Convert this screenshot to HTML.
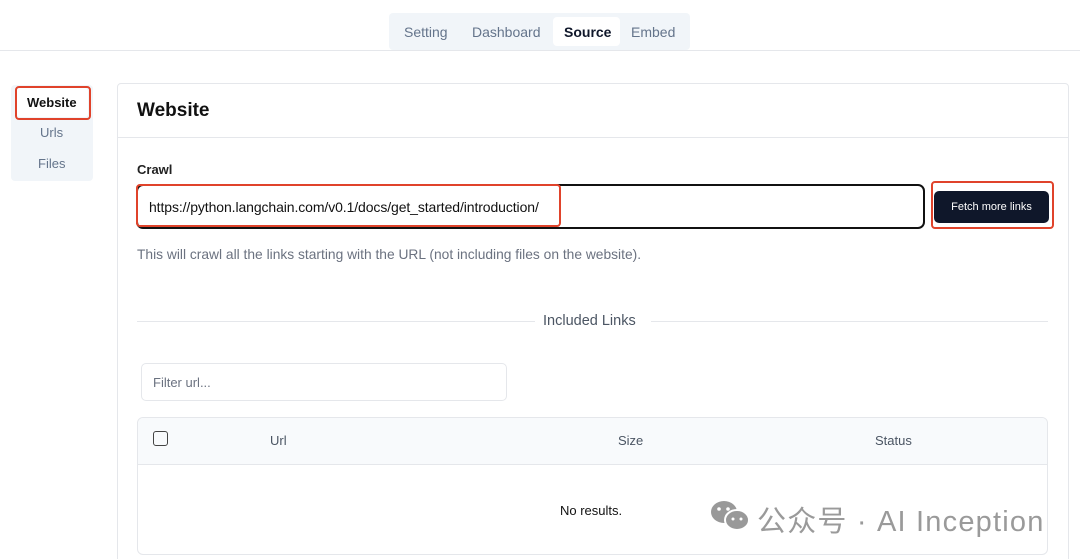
<!DOCTYPE html>
<html><head><meta charset="utf-8"><style>
html,body{margin:0;width:1080px;height:559px;overflow:hidden}
body{background:#fff;font-family:"Liberation Sans",sans-serif;position:relative;color:#111}
.a{position:absolute}
.tabs{left:389px;top:13px;width:301px;height:37px;background:#f1f5f9;border-radius:4px}
.tab{position:absolute;top:18px;font-size:14px;color:#64748b}
.rb{position:absolute;border:2px solid #e0432b;border-radius:4px;box-sizing:border-box}
</style></head><body>
<div class="a" style="left:0;top:50px;width:1080px;height:1px;background:#e5e7eb"></div>
<div class="a tabs"></div>
<div class="a" style="left:553px;top:17px;width:67px;height:29px;background:#fff;border-radius:4px"></div>
<div class="tab" style="left:404px;top:24px">Setting</div>
<div class="tab" style="left:472px;top:24px">Dashboard</div>
<div class="tab" style="left:564px;top:24px;color:#0f172a;font-weight:bold">Source</div>
<div class="tab" style="left:631px;top:24px">Embed</div>

<div class="a" style="left:11px;top:85px;width:82px;height:96px;background:#f1f5f9;border-radius:4px"></div>
<div class="a" style="left:17px;top:88px;width:71px;height:29px;background:#fff;border-radius:3px"></div>
<div class="rb" style="left:15px;top:86px;width:76px;height:34px"></div>
<div class="a" style="left:27px;top:95px;font-size:13px;font-weight:bold">Website</div>
<div class="a" style="left:40px;top:125px;font-size:13px;color:#64748b">Urls</div>
<div class="a" style="left:38px;top:156px;font-size:13px;color:#64748b">Files</div>

<div class="a" style="left:117px;top:83px;width:950px;height:500px;border:1px solid #e5e7eb;border-radius:4px"></div>
<div class="a" style="left:118px;top:137px;width:950px;height:1px;background:#e5e7eb"></div>
<div class="a" style="left:137px;top:100px;font-size:19px;font-weight:bold">Website</div>
<div class="a" style="left:137px;top:162px;font-size:13px;font-weight:bold;color:#222">Crawl</div>
<div class="a" style="left:136px;top:184px;width:789px;height:45px;border:2px solid #111;border-radius:7px;box-sizing:border-box"></div>
<div class="rb" style="left:136px;top:184px;width:425px;height:43px"></div>
<div class="a" style="left:149px;top:199px;font-size:14px;letter-spacing:-0.1px">https://python.langchain.com/v0.1/docs/get_started/introduction/</div>
<div class="a" style="left:934px;top:191px;width:115px;height:32px;background:#0f172a;border-radius:5px;color:#fff;font-size:11px;line-height:32px;text-align:center">Fetch more links</div>
<div class="rb" style="left:931px;top:181px;width:123px;height:48px"></div>
<div class="a" style="left:137px;top:247px;font-size:13.8px;color:#6b7280">This will crawl all the links starting with the URL (not including files on the website).</div>

<div class="a" style="left:137px;top:321px;width:398px;height:1px;background:#e5e7eb"></div>
<div class="a" style="left:651px;top:321px;width:397px;height:1px;background:#e5e7eb"></div>
<div class="a" style="left:543px;top:313px;font-size:14.5px;color:#4b5563">Included Links</div>

<div class="a" style="left:141px;top:363px;width:366px;height:38px;border:1px solid #e5e7eb;border-radius:5px;box-sizing:border-box"></div>
<div class="a" style="left:153px;top:375px;font-size:13px;color:#6b7280">Filter url...</div>

<div class="a" style="left:137px;top:417px;width:911px;height:138px;border:1px solid #e5e7eb;border-radius:6px;box-sizing:border-box;overflow:hidden">
<div style="height:46px;background:#f8fafc;border-bottom:1px solid #e5e7eb"></div></div>
<div class="a" style="left:153px;top:431px;width:13px;height:13px;border:1.5px solid #444;border-radius:3px"></div>
<div class="a" style="left:270px;top:433px;font-size:13px;color:#4b5563">Url</div>
<div class="a" style="left:618px;top:433px;font-size:13px;color:#4b5563">Size</div>
<div class="a" style="left:875px;top:433px;font-size:13px;color:#4b5563">Status</div>
<div class="a" style="left:560px;top:503px;font-size:13px">No results.</div>

<svg class="a" style="left:709px;top:500px" width="42" height="32" viewBox="0 0 42 32"><ellipse cx="15" cy="12" rx="13" ry="11" fill="#999"/><ellipse cx="28" cy="20" rx="12" ry="10" fill="#999" stroke="#fff" stroke-width="2"/><circle cx="10" cy="9" r="1.8" fill="#fff"/><circle cx="19" cy="9" r="1.8" fill="#fff"/><circle cx="24" cy="19" r="1.5" fill="#fff"/><circle cx="32" cy="19" r="1.5" fill="#fff"/></svg>
<div class="a" style="left:757px;top:498px;font-size:29px;letter-spacing:1.2px;color:#9a9a9a;font-family:'Liberation Sans','Noto Sans CJK SC',sans-serif;white-space:nowrap">公众号 · AI Inception</div>
</body></html>
